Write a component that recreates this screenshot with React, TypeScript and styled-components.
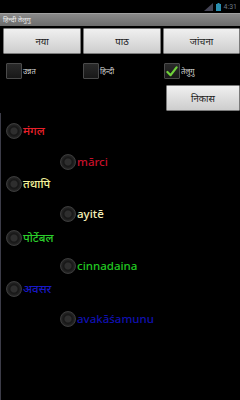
import React from "react";
import styled, { createGlobalStyle } from "styled-components";

const GlobalStyle = createGlobalStyle`
  html, body { margin: 0; padding: 0; background: #000; }
  body { font-family: "Noto Sans", Roboto, "DejaVu Sans", sans-serif; width: 240px; height: 400px; overflow: hidden; }
`;

const Screen = styled.div`
  width: 240px;
  height: 400px;
  background: #000;
  display: flex;
  flex-direction: column;
`;

const StatusBar = styled.div`
  height: 13px;
  display: flex;
  justify-content: flex-end;
  align-items: center;
  gap: 3px;
  padding-right: 3px;
  color: #6c7a88;
  font-family: "Roboto", sans-serif;
  font-size: 7px;
`;

const TitleBar = styled.div`
  height: 12px;
  background: linear-gradient(#8a8a8a, #6c6c6c);
  border-top: 1px solid #a0a0a0;
  color: #eee;
  font-size: 7px;
  line-height: 12px;
  padding-left: 3px;
`;

const ButtonRow = styled.div`
  display: grid;
  grid-template-columns: 78px 78px 77px;
  gap: 2px;
  padding: 2px 0 0 3px;
`;

const Btn = styled.div<{ $w?: number }>`
  height: 26px;
  ${(p) => (p.$w ? `width: ${p.$w}px;` : "")}
  box-sizing: border-box;
  background: linear-gradient(#f0f0f0, #cdcdcd);
  border: 1px solid #7a7a7a;
  border-radius: 1px;
  color: #1a1a1a;
  font-size: 9.5px;
  display: flex;
  align-items: center;
  justify-content: center;
`;

const CheckRow = styled.div`
  display: grid;
  grid-template-columns: 77px 81px 76px;
  padding: 8px 0 0 6px;
  height: 18px;
`;

const CheckItem = styled.div`
  display: flex;
  align-items: center;
  gap: 1px;
  color: #ddd;
  font-size: 7.5px;
`;

const Box = styled.div`
  width: 16px;
  height: 16px;
  box-sizing: border-box;
  border: 1px solid #4a4a4a;
  background: linear-gradient(#2a2a2a, #181818);
  border-radius: 1px;
  display: flex;
  align-items: center;
  justify-content: center;
`;

const ExitRow = styled.div`
  display: flex;
  justify-content: flex-end;
  padding-top: 5px;
`;

const List = styled.div`
  flex: 1;
  margin-top: 2px;
  border-left: 1px solid #3c3c48;
  padding-top: 10px;
  display: flex;
  flex-direction: column;
`;

const WordRow = styled.div<{ $indent?: boolean; $h: number }>`
  height: ${(p) => p.$h}px;
  display: flex;
  align-items: flex-start;
  padding-left: ${(p) => (p.$indent ? 59 : 5)}px;
`;

const Radio = styled.div`
  width: 16px;
  height: 16px;
  border-radius: 50%;
  box-sizing: border-box;
  border: 1px solid #3c3c3c;
  background: radial-gradient(circle at 50% 50%, #2e2e2e 0 30%, #161616 42%, #262626 68%, #3e3e3e 100%);
  flex: none;
`;

const Word = styled.span<{ $c: string }>`
  color: ${(p) => p.$c};
  font-size: 11.5px;
  font-weight: 500;
  line-height: 16px;
  margin-left: 1px;
`;

const Check = () => (
  <svg width="12" height="11" viewBox="0 0 13 12">
    <path d="M1.5 6.5 L5 10 L11.5 1.5" stroke="#6fd23a" strokeWidth="2.4" fill="none" strokeLinecap="round" strokeLinejoin="round" />
  </svg>
);

const words: { t: string; c: string; indent?: boolean; h: number }[] = [
  { t: "मंगल", c: "#e8202a", h: 31 },
  { t: "mārci", c: "#c8102a", indent: true, h: 22 },
  { t: "तथापि", c: "#f2f29a", h: 30 },
  { t: "ayitē", c: "#f4f0b8", indent: true, h: 24 },
  { t: "पोर्टेबल", c: "#2ccf2c", h: 28 },
  { t: "cinnadaina", c: "#22c822", indent: true, h: 23 },
  { t: "अवसर", c: "#1818c8", h: 30 },
  { t: "avakāśamunu", c: "#1010b0", indent: true, h: 24 },
];

export default function App() {
  return (
    <>
      <GlobalStyle />
      <Screen>
        <StatusBar>
          <svg width="9" height="8" viewBox="0 0 9 8">
            <path d="M0 8 L9 0 L9 8 Z" fill="#445" />
          </svg>
          <svg width="5" height="8" viewBox="0 0 5 8">
            <rect x="0" y="1" width="5" height="7" fill="#2a8fb0" />
            <rect x="1.5" y="0" width="2" height="1" fill="#2a8fb0" />
          </svg>
          <span>4:31</span>
        </StatusBar>
        <TitleBar>हिन्दी तेलुगु</TitleBar>
        <ButtonRow>
          <Btn>नया</Btn>
          <Btn>पाठ</Btn>
          <Btn>जांचना</Btn>
        </ButtonRow>
        <CheckRow>
          <CheckItem><Box />उन्नत</CheckItem>
          <CheckItem><Box />हिन्दी</CheckItem>
          <CheckItem><Box><Check /></Box>तेलुगु</CheckItem>
        </CheckRow>
        <ExitRow>
          <Btn $w={74}>निकास</Btn>
        </ExitRow>
        <List>
          {words.map((w, i) => (
            <WordRow key={i} $indent={w.indent} $h={w.h}>
              <Radio />
              <Word $c={w.c}>{w.t}</Word>
            </WordRow>
          ))}
        </List>
      </Screen>
    </>
  );
}
